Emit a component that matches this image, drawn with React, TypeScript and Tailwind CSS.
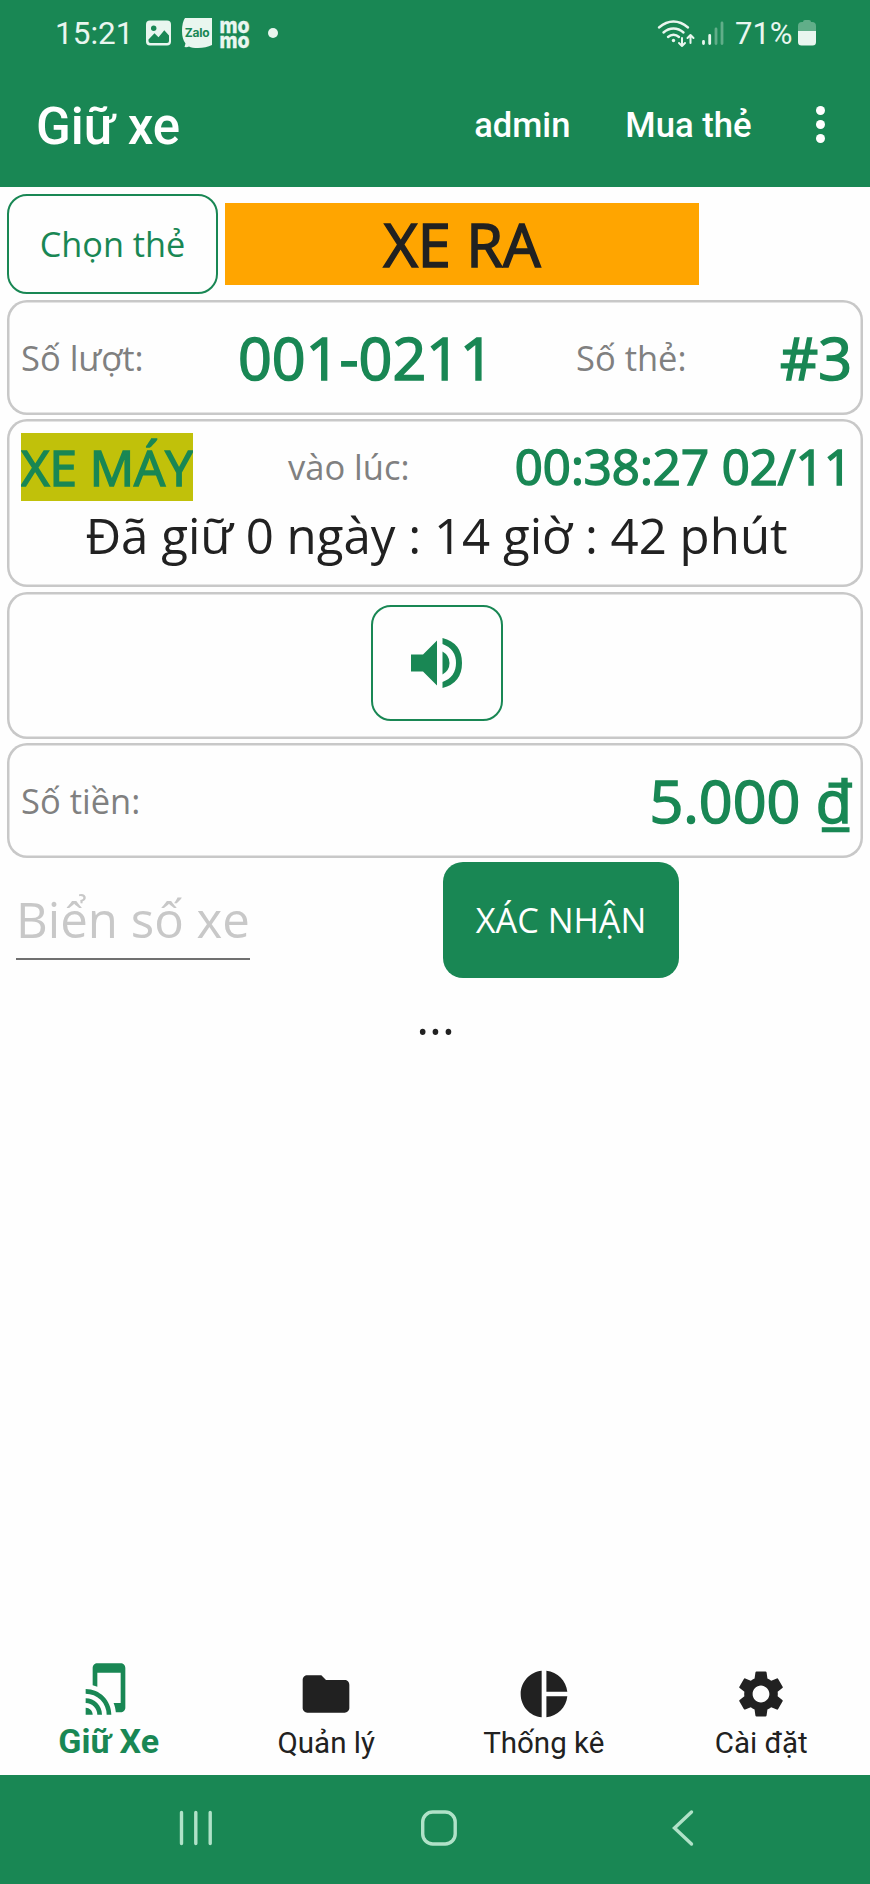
import type { ReactNode } from 'react';
import { MdFolder, MdPieChart, MdSettings, MdTapAndPlay } from 'react-icons/md';

const LABEL = 'pt-px text-[34.5px] text-[#808080]';
const VALUE = 'text-[#198754] [-webkit-text-stroke:1.6px_#198754]';

function StatusBar() {
  return (
    <div className="flex h-[66px] items-center pl-[55px] pr-[54px] text-[31.5px] text-[#e9f6ef]">
      <span className="w-[91px] pt-px">15:21</span>
      <svg className="h-[26px] w-[26px]" viewBox="0 0 26 26">
        <rect x="0" y="0.5" width="25" height="25" rx="4" fill="currentColor" />
        <circle cx="7.7" cy="8.3" r="2.7" fill="#198754" />
        <path d="M2.5 19.5l6-6.3 4 4 5.8-7 4.7 5.3v5.5q0 2-2 2H4.5q-2 0-2-2z" fill="#198754" />
      </svg>
      <svg className="ml-[10px] h-[30px] w-[30px]" viewBox="0 0 30 30">
        <path d="M3 0h27v27q-6 3-14 3-6 0-9-1.5-2 1-4.5.5l1-3.5Q0 21 0 13 0 4 3 0z" fill="currentColor" />
        <text x="2.7" y="18.5" fontSize="12" fontWeight="700" fill="#198754" textLength="25" fontFamily="Inter, sans-serif">
          Zalo
        </text>
      </svg>
      <svg className="ml-[8px] h-[30px] w-[30px] overflow-visible" viewBox="0 0 30 30">
        <g fill="currentColor" stroke="currentColor" strokeWidth="0.3" fontSize="21" fontWeight="800" fontFamily="Inter, sans-serif">
          <text x="-0.5" y="15" textLength="30" lengthAdjust="spacingAndGlyphs">mo</text>
          <text x="-0.5" y="29.5" textLength="30" lengthAdjust="spacingAndGlyphs">mo</text>
        </g>
      </svg>
      <span className="ml-[18px] h-[10px] w-[10px] rounded-full bg-[#e9f6ef]" />

      <svg className="ml-auto h-[30px] w-[68px]" viewBox="0 0 68 30" fill="none" stroke="currentColor" strokeLinecap="round">
        <path d="M2 9.5Q9 3.5 16.500 3.5T31 9.5M6.5 14.5q4.5-4 10-4t10 4M11 19q2.5-2.2 5.5-2.2t5.5 2.2" strokeWidth="2.4" />
        <circle cx="16.5" cy="22.5" r="1.7" fill="currentColor" stroke="none" />
        <path d="M25 20v8m-3-3l3 3 3-3M33.5 25v-8m-3 3l3-3 3 3" strokeWidth="2" strokeLinejoin="round" />
        <path d="M46.5 23.5v2M52.7 17.5v8" strokeWidth="2.8" />
        <path d="M59 11v14.5M65 5v20.5" strokeWidth="2.8" opacity="0.35" />
      </svg>
      <span className="ml-[10px] w-[63px] pt-px text-[31px] whitespace-nowrap">71%</span>
      <svg className="h-[26px] w-[18px]" viewBox="0 0 18 26" fill="currentColor">
        <path d="M5 2q0-2 2-2h4q2 0 2 2h1q4 0 4 4v5H0V6q0-4 4-4z" opacity="0.35" />
        <path d="M0 11h18v11q0 3.5-3.5 3.5h-11Q0 25.5 0 22z" />
      </svg>
    </div>
  );
}

function AppBar() {
  return (
    <div className="flex h-[121px] items-center pb-[4px] pl-[36px] pr-[45px] font-medium text-white">
      <h1 className="pt-[3px] text-[51px] font-medium">Giữ xe</h1>
      <span className="ml-auto pt-px text-[34.5px]">admin</span>
      <span className="ml-[55px] pt-px text-[34.7px]">Mua thẻ</span>
      <button className="ml-[64px] flex flex-col gap-[4.5px]" aria-label="Menu">
        <span className="h-[9.3px] w-[9.3px] rounded-full bg-white" />
        <span className="h-[9.3px] w-[9.3px] rounded-full bg-white" />
        <span className="h-[9.3px] w-[9.3px] rounded-full bg-white" />
      </button>
    </div>
  );
}

function Card({ className, children }: { className: string; children?: ReactNode }) {
  return (
    <section className={`w-[856px] rounded-[20px] pl-[14px] pr-[11px] shadow-[inset_0_0_0_2.5px_#c8c8c8] ${className}`}>
      {children}
    </section>
  );
}

const TABS = [
  { label: 'Giữ Xe', icon: MdTapAndPlay, active: true },
  { label: 'Quản lý', icon: MdFolder, active: false },
  { label: 'Thống kê', icon: MdPieChart, active: false },
  { label: 'Cài đặt', icon: MdSettings, active: false },
];

function TabBar() {
  return (
    <nav className="mt-auto grid h-[120px] grid-cols-4 font-[Roboto,sans-serif]">
      {TABS.map(({ label, icon: Icon, active }) => (
        <button
          key={label}
          className={`flex flex-col items-center ${active ? 'pt-[6px] text-[#198754]' : 'pt-[11px] text-[#212121]'}`}
        >
          <Icon className="h-[56px] w-[56px]" />
          <span className={active ? 'mt-[5px] text-[34px] leading-[38px] font-bold' : 'mt-[2px] text-[29.5px] leading-[38px]'}>
            {label}
          </span>
        </button>
      ))}
    </nav>
  );
}

function SystemNav() {
  return (
    <div className="flex h-[109px] items-center bg-[#198754] pb-[3px] pl-[178px] text-[#b0e2c8]">
      <svg className="h-[36px] w-[36px]" viewBox="0 0 36 36" fill="none" stroke="currentColor" strokeWidth="3.4" strokeLinecap="round">
        <path d="M3.5 2.5v31M17.8 2.5v31M32.2 2.5v31" />
      </svg>
      <svg className="ml-[206px] h-[36px] w-[38px]" viewBox="0 0 38 36" fill="none" stroke="currentColor" strokeWidth="3.4">
        <rect x="2.7" y="2" width="32.5" height="32" rx="10" />
      </svg>
      <svg className="ml-[213px] h-[38px] w-[24px]" viewBox="0 0 24 38" fill="none" stroke="currentColor" strokeWidth="3.4" strokeLinecap="round">
        <path d="M20.5 3L3.5 19l17 16" />
      </svg>
    </div>
  );
}

export default function App() {
  return (
    <div className="flex h-[1884px] w-[870px] flex-col overflow-hidden bg-[#fefefe] font-['Open_Sans',sans-serif] leading-none text-[#212121]">
      <header className="h-[187px] bg-[#198754] font-[Roboto,sans-serif]">
        <StatusBar />
        <AppBar />
      </header>

      <main className="flex flex-col pl-[7px]">
        <div className="mt-[7px] flex h-[100px] items-center">
          <button className="h-[100px] w-[211px] rounded-[20px] border-2 border-[#198754] text-[34.3px] text-[#198754]">
            Chọn thẻ
          </button>
          <div className="ml-[7px] flex h-[82px] w-[474px] items-center justify-center bg-[#ffa500] text-[59.5px] [-webkit-text-stroke:1.6px_#212121]">
            XE RA
          </div>
        </div>

        <Card className="mt-[6px] flex h-[115px] items-center">
          <span className={`w-[217px] ${LABEL}`}>Số lượt:</span>
          <span className={`w-[338px] text-[59.2px] ${VALUE}`}>001-0211</span>
          <span className={LABEL}>Số thẻ:</span>
          <span className={`ml-auto text-[59.2px] ${VALUE}`}>#3</span>
        </Card>

        <Card className="mt-[4px] h-[168px] pt-[14px]">
          <div className="flex h-[68px] items-center">
            <span className={`flex h-[68px] w-[172px] items-center overflow-hidden bg-[#c1c10a] text-[49.3px] whitespace-nowrap ${VALUE}`}>
              XE MÁY
            </span>
            <span className={`ml-[95px] ${LABEL}`}>vào lúc:</span>
            <span className={`ml-auto text-[49.1px] ${VALUE}`}>00:38:27 02/11</span>
          </div>
          <div className="flex h-[68px] items-center justify-center text-[49.2px] whitespace-nowrap">
            Đã giữ 0 ngày : 14 giờ : 42 phút
          </div>
        </Card>

        <Card className="mt-[5px] flex h-[147px] justify-center pt-[13px]">
          <button
            className="flex h-[116px] w-[132px] items-center justify-center rounded-[20px] border-2 border-[#198754] text-[#198754]"
            aria-label="Phát âm thanh"
          >
            <svg className="h-[50px] w-[52px]" viewBox="0 0 52 50" fill="currentColor">
              <path d="M0 16.5h12L26 2.5v45L12 33.5H0z" />
              <path d="M31.5 13.5q7 4 7 11.5t-7 11.5z" />
              <path d="M31.5 0Q51 5 51 25T31.5 50v-6Q45 39 45 25T31.5 6z" />
            </svg>
          </button>
        </Card>

        <Card className="mt-[4px] flex h-[115px] items-center">
          <span className={LABEL}>Số tiền:</span>
          <span className={`ml-auto text-[59.2px] ${VALUE}`}>5.000 ₫</span>
        </Card>

        <div className="mt-[4px] flex h-[116px]">
          <input
            className="ml-[9px] mt-[14px] h-[84px] w-[234px] border-b-2 border-[#707070] bg-transparent pt-[3px] text-[49.2px] outline-none placeholder:text-[#c8c8c8] placeholder:opacity-100"
            placeholder="Biển số xe"
          />
          <button className="ml-[193px] h-[116px] w-[236px] rounded-[20px] bg-[#198754] text-[34.3px] text-white">
            XÁC NHẬN
          </button>
        </div>

        <div className="mt-[5px] flex h-[66px] w-[857px] items-center justify-center text-[49px]">...</div>
      </main>

      <TabBar />
      <SystemNav />
    </div>
  );
}
